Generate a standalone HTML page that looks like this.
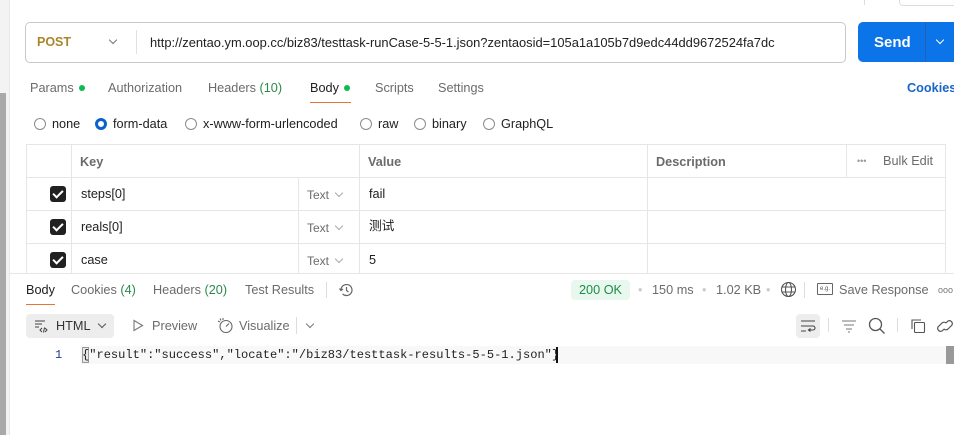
<!DOCTYPE html>
<html><head><meta charset="utf-8"><style>
*{margin:0;padding:0;box-sizing:border-box}
body{width:954px;height:435px;overflow:hidden;background:#fff;font-family:"Liberation Sans","Noto Sans CJK SC",sans-serif;font-size:12.7px;line-height:15px;color:#212121;position:relative}
.a{position:absolute;white-space:nowrap}
.g{color:#6b6b6b}
.dot{display:inline-block;width:6px;height:6px;border-radius:3px;background:#0cbb52;margin-left:5px;vertical-align:1px}
.rad{display:inline-block;width:12px;height:12px;border:1px solid #8a8a8a;border-radius:50%;vertical-align:-2px;margin-right:6px}
.cb{position:absolute;width:16px;height:16px;background:#212121;border-radius:3px;left:50px}
.cb:after{content:"";position:absolute;left:5px;top:2px;width:4px;height:8px;border:solid #fff;border-width:0 2px 2px 0;transform:rotate(45deg)}
.hl{position:absolute;height:1px;background:#e6e6e6}
.vl{position:absolute;width:1px;background:#e6e6e6}
.chev{display:inline-block;width:6px;height:6px;border:solid #777;border-width:0 1px 1px 0;transform:rotate(45deg);vertical-align:3px}
</style></head><body>
<div class="a" style="left:0;top:0;width:10px;height:435px;background:#f3f3f3;border-right:1px solid #e8e8e8"></div>
<div class="a" style="left:0;top:93px;width:6px;height:342px;background:#a9a9a9"></div>
<div class="a" style="left:899px;top:-5px;width:60px;height:11px;border:1px solid #ddd;border-radius:4px"></div>
<div class="a" style="left:864px;top:0;width:1px;height:5px;background:#ddd"></div>

<div class="a" style="left:25px;top:22px;width:821px;height:41px;border:1px solid #c8c8c8;border-radius:5px"></div>
<div class="a" style="left:37px;top:35px;font-weight:bold;color:#a9862a;font-size:12.5px">POST</div>
<div class="a" style="left:110px;top:35px"><span class="chev"></span></div>
<div class="a" style="left:136px;top:30px;width:1px;height:24px;background:#e0e0e0"></div>
<div class="a" style="left:150px;top:35px;font-size:12.9px;color:#212121">http://zentao.ym.oop.cc/biz83/testtask-runCase-5-5-1.json?zentaosid=105a1a105b7d9edc44dd9672524fa7dc</div>
<div class="a" style="left:858px;top:22px;width:100px;height:40px;background:#0a74e8;border-radius:5px"></div>
<div class="a" style="left:925px;top:22px;width:1px;height:40px;background:#2a5fb0"></div>
<div class="a" style="left:874px;top:34px;color:#fff;font-weight:bold;font-size:15px;line-height:17px">Send</div>
<div class="a" style="left:937px;top:35px"><span class="chev" style="border-color:#fff"></span></div>

<div class="a g" style="left:30px;top:81px">Params<span class="dot"></span></div>
<div class="a g" style="left:108px;top:81px">Authorization</div>
<div class="a g" style="left:208px;top:81px">Headers <span style="color:#2a8a4a">(10)</span></div>
<div class="a" style="left:310px;top:81px">Body<span class="dot"></span></div>
<div class="a" style="left:310px;top:102px;width:41px;height:1px;background:#e8723a"></div>
<div class="a g" style="left:375px;top:81px">Scripts</div>
<div class="a g" style="left:438px;top:81px">Settings</div>
<div class="a" style="left:907px;top:81px;color:#1a66c8;font-weight:bold">Cookies</div>

<div class="a" style="left:34px;top:117px"><span class="rad"></span>none</div>
<div class="a" style="left:95px;top:117px"><span class="rad" style="border:3px solid #0a62d0"></span>form-data</div>
<div class="a" style="left:185px;top:117px"><span class="rad"></span>x-www-form-urlencoded</div>
<div class="a" style="left:360px;top:117px"><span class="rad"></span>raw</div>
<div class="a" style="left:414px;top:117px"><span class="rad"></span>binary</div>
<div class="a" style="left:483px;top:117px"><span class="rad"></span>GraphQL</div>

<div class="hl" style="left:26px;top:144px;width:920px"></div>
<div class="hl" style="left:26px;top:177px;width:920px"></div>
<div class="hl" style="left:26px;top:210px;width:920px"></div>
<div class="hl" style="left:26px;top:243px;width:920px"></div>
<div class="vl" style="left:26px;top:144px;height:130px"></div>
<div class="vl" style="left:71px;top:144px;height:130px"></div>
<div class="vl" style="left:298px;top:177px;height:97px"></div>
<div class="vl" style="left:359px;top:144px;height:130px"></div>
<div class="vl" style="left:647px;top:144px;height:130px"></div>
<div class="vl" style="left:846px;top:144px;height:33px"></div>
<div class="vl" style="left:945px;top:144px;height:130px"></div>
<div class="a g" style="left:80px;top:155px;font-weight:bold">Key</div>
<div class="a g" style="left:368px;top:155px;font-weight:bold">Value</div>
<div class="a g" style="left:656px;top:155px;font-weight:bold">Description</div>
<div class="a" style="left:857px;top:154px;color:#999;font-size:9px">•••</div>
<div class="a g" style="left:883px;top:154px">Bulk Edit</div>
<div class="cb" style="top:186px"></div><div class="a" style="left:81px;top:187px">steps[0]</div>
<div class="cb" style="top:219px"></div><div class="a" style="left:81px;top:220px">reals[0]</div>
<div class="cb" style="top:252px"></div><div class="a" style="left:81px;top:253px">case</div>
<div class="a g" style="left:307px;top:188px;font-size:12px">Text &nbsp;<span class="chev" style="border-color:#aaa"></span></div>
<div class="a g" style="left:307px;top:221px;font-size:12px">Text &nbsp;<span class="chev" style="border-color:#aaa"></span></div>
<div class="a g" style="left:307px;top:254px;font-size:12px">Text &nbsp;<span class="chev" style="border-color:#aaa"></span></div>
<div class="a" style="left:369px;top:187px">fail</div>
<div class="a" style="left:369px;top:219px">测试</div>
<div class="a" style="left:369px;top:253px">5</div>

<div class="a" style="left:10px;top:273px;width:944px;height:1px;background:#e6e6e6"></div>
<div class="a" style="left:26px;top:283px">Body</div>
<div class="a" style="left:26px;top:304px;width:29px;height:1px;background:#e8723a"></div>
<div class="a g" style="left:71px;top:283px">Cookies <span style="color:#2a8a4a">(4)</span></div>
<div class="a g" style="left:153px;top:283px">Headers <span style="color:#2a8a4a">(20)</span></div>
<div class="a g" style="left:245px;top:283px">Test Results</div>
<div class="a" style="left:326px;top:282px;width:1px;height:16px;background:#ddd"></div>
<svg class="a" style="left:338px;top:282px" width="16" height="16" viewBox="0 0 16 16" fill="none" stroke="#666" stroke-width="1.2"><path d="M3 8a5.5 5.5 0 1 1 1.6 3.9"/><path d="M1.5 6.5 3 8.5 5 7"/><path d="M8.5 5v3.5l2 1.5"/></svg>
<div class="a" style="left:571px;top:280px;width:59px;height:20px;background:#e8f8ee;border-radius:4px"></div>
<div class="a" style="left:579px;top:283px;color:#1f8c4a">200 OK</div>
<div class="a" style="left:638px;top:283px;color:#ccc">•</div>
<div class="a g" style="left:652px;top:283px">150 ms</div>
<div class="a" style="left:702px;top:283px;color:#ccc">•</div>
<div class="a g" style="left:716px;top:283px">1.02 KB</div>
<div class="a" style="left:766px;top:283px;color:#ccc">•</div>
<svg class="a" style="left:780px;top:281px" width="17" height="17" viewBox="0 0 17 17" fill="none" stroke="#555" stroke-width="1.1"><circle cx="8.5" cy="8.5" r="7"/><ellipse cx="8.5" cy="8.5" rx="3" ry="7"/><path d="M2 6h13M2 11h13"/></svg>
<div class="a" style="left:804px;top:282px;width:1px;height:16px;background:#ddd"></div>
<div class="a" style="left:817px;top:283px;width:16px;height:12px;border:1px solid #666;border-radius:1px;font-size:6px;color:#555;text-align:center;line-height:10px">e.g.</div>
<div class="a g" style="left:839px;top:283px">Save Response</div>
<div class="a" style="left:938px;top:283px;color:#777;font-size:9px">ooo</div>

<div class="a" style="left:26px;top:314px;width:88px;height:24px;background:#ededed;border-radius:4px"></div>
<svg class="a" style="left:34px;top:319px" width="16" height="14" viewBox="0 0 16 14" fill="none" stroke="#444" stroke-width="1"><path d="M1 2h10M1 5h7M1 8h4"/><path d="M8 9l-2 2 2 2M11 9l2 2-2 2M10.5 8.5l-1 5"/></svg>
<div class="a" style="left:56px;top:319px;color:#333">HTML</div>
<div class="a" style="left:99px;top:319px"><span class="chev" style="border-color:#555"></span></div>
<svg class="a" style="left:132px;top:319px" width="12" height="13" viewBox="0 0 12 13" fill="none" stroke="#777" stroke-width="1.1"><path d="M2 1.5v10l8.5-5z"/></svg>
<div class="a g" style="left:152px;top:319px">Preview</div>
<svg class="a" style="left:216px;top:317px" width="18" height="17" viewBox="0 0 18 17" fill="none" stroke="#666" stroke-width="1.1"><circle cx="10" cy="9.5" r="6"/><path d="M10 9.5l3-3M2 4l2 1M4 1.5l1 2M7 1l0 2"/></svg>
<div class="a g" style="left:239px;top:319px">Visualize</div>
<div class="a" style="left:296px;top:317px;width:1px;height:17px;background:#ddd"></div>
<div class="a" style="left:307px;top:319px"><span class="chev"></span></div>
<div class="a" style="left:796px;top:314px;width:24px;height:24px;background:#ededed;border-radius:4px"></div>
<svg class="a" style="left:800px;top:318px" width="16" height="16" viewBox="0 0 16 16" fill="none" stroke="#444" stroke-width="1.1"><path d="M1 3h14M1 8h12a2 2 0 0 1 0 4H9M1 13h5M10.5 10.5 8.5 12l2 1.5"/></svg>
<div class="a" style="left:828px;top:318px;width:1px;height:14px;background:#ddd"></div>
<svg class="a" style="left:841px;top:318px" width="16" height="16" viewBox="0 0 16 16" fill="none" stroke="#777" stroke-width="1.1"><path d="M1 3h14M3 7h10M5 11h6M7 14h2"/></svg>
<svg class="a" style="left:868px;top:317px" width="18" height="18" viewBox="0 0 18 18" fill="none" stroke="#555" stroke-width="1.3"><circle cx="7.5" cy="7.5" r="6"/><path d="M12 12l4.5 4.5"/></svg>
<div class="a" style="left:897px;top:318px;width:1px;height:14px;background:#ddd"></div>
<svg class="a" style="left:910px;top:318px" width="16" height="16" viewBox="0 0 16 16" fill="none" stroke="#555" stroke-width="1.1"><rect x="4.5" y="4.5" width="10" height="10" rx="1"/><path d="M2 11V2h9"/></svg>
<svg class="a" style="left:936px;top:317px" width="18" height="18" viewBox="0 0 18 18" fill="none" stroke="#555" stroke-width="1.2"><path d="M8 12l-2 2a3 3 0 0 1-4-4l4-4a3 3 0 0 1 4 0M10 6l2-2a3 3 0 0 1 4 4l-4 4a3 3 0 0 1-4 0"/></svg>

<div class="a" style="left:80px;top:346px;width:866px;height:18px;background:#f8f8f8"></div>
<div class="a" style="left:946px;top:346px;width:8px;height:18px;background:#999"></div>
<div class="a" style="left:55px;top:348px;font-family:'Liberation Mono',monospace;font-size:12px;color:#1f3d8c">1</div>
<div class="a" style="left:82px;top:347px;width:7px;height:16px;border:1px solid #999;background:#e8e8e8"></div>
<div class="a" style="left:82px;top:348px;font-family:'Liberation Mono',monospace;font-size:12.05px;color:#222">{"result":"success","locate":"/biz83/testtask-results-5-5-1.json"}</div>
<div class="a" style="left:556px;top:347px;width:2px;height:16px;background:#111"></div>
</body></html>
